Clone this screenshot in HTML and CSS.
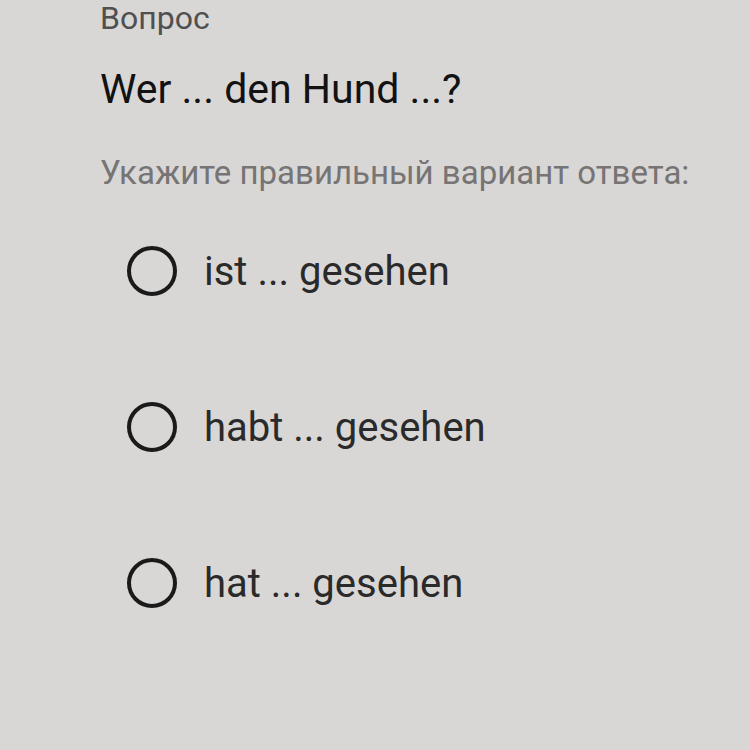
FILE: index.html
```html
<!DOCTYPE html>
<html lang="ru">
<head>
<meta charset="utf-8">
<link rel="stylesheet" href="styles.css">
</head>
<body>
<main class="quiz">
  <div class="label">Вопрос</div>
  <h1 class="question">Wer ... den Hund ...?</h1>
  <p class="hint">Укажите правильный вариант ответа:</p>
  <ul class="options">
    <li class="option"><span class="radio"></span><span class="option-text">ist ... gesehen</span></li>
    <li class="option"><span class="radio"></span><span class="option-text">habt ... gesehen</span></li>
    <li class="option"><span class="radio"></span><span class="option-text">hat ... gesehen</span></li>
  </ul>
</main>
</body>
</html>
```
FILE: styles.css
```css
html, body {
  margin: 0;
  padding: 0;
  height: 100%;
}
body {
  background: #d9d7d6;
  font-family: Roboto, "Liberation Sans", sans-serif;
  overflow: hidden;
}
.quiz {
  height: 100%;
  box-sizing: border-box;
  padding: 0 0 0 100px;
  display: flex;
  flex-direction: column;
}
.label {
  font-size: 32px;
  line-height: 36px;
  color: #505050;
  margin-top: 0;
}
.question {
  font-size: 41px;
  font-weight: 400;
  line-height: 48px;
  color: #121212;
  margin: 29px 0 0;
}
.hint {
  font-size: 33px;
  line-height: 38px;
  color: #767474;
  margin: 41px 0 0;
}
.options {
  list-style: none;
  margin: 54px 0 0;
  padding: 0 0 0 27px;
  display: flex;
  flex-direction: column;
  gap: 106px;
}
.option {
  display: flex;
  align-items: center;
  gap: 27px;
  height: 50px;
}
.radio {
  width: 42px;
  height: 42px;
  border: 4px solid #1a1a1a;
  border-radius: 50%;
  flex: none;
}
.option-text {
  font-size: 40px;
  color: #2a2a2a;
}
```
